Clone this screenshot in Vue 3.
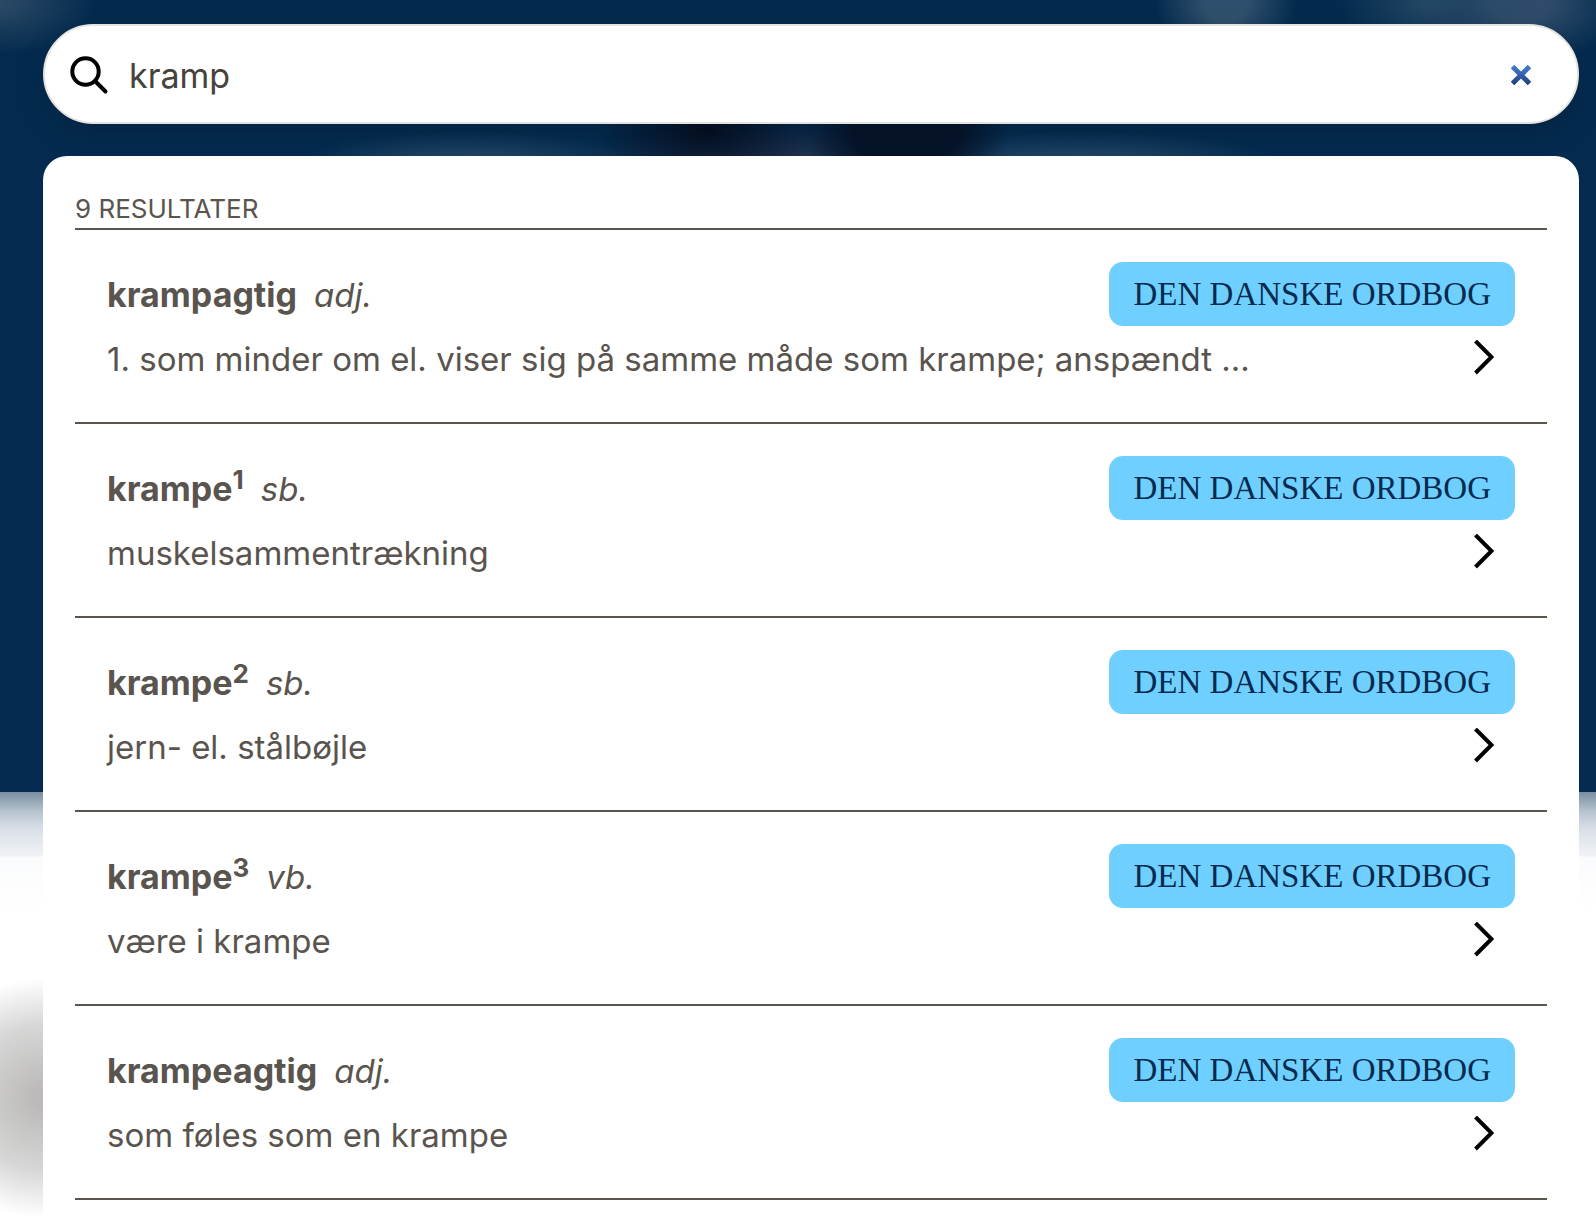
<script setup>
import { ref } from 'vue'

const query = ref('kramp')
const results = [
  { word: 'krampagtig', kind: 'adj.', text: '1. som minder om el. viser sig på samme måde som krampe; anspændt ...' },
  { word: 'krampe', index: '1', kind: 'sb.', text: 'muskelsammentrækning' },
  { word: 'krampe', index: '2', kind: 'sb.', text: 'jern- el. stålbøjle' },
  { word: 'krampe', index: '3', kind: 'vb.', text: 'være i krampe' },
  { word: 'krampeagtig', kind: 'adj.', text: 'som føles som en krampe' },
]
</script>

<template>
  <main class="page">
    <div class="backdrop" aria-hidden="true">
      <div class="hero"></div>
      <div class="below"></div>
    </div>

    <form class="search" role="search" @submit.prevent>
      <svg class="search-icon" viewBox="0 0 40 40" aria-hidden="true">
        <circle cx="16.5" cy="16.5" r="13.2" />
        <path d="M26 26 36.5 36.5" />
      </svg>
      <input v-model="query" class="field" type="text" aria-label="Søg" />
      <button class="clear" type="button" aria-label="Ryd" @click="query = ''">
        <svg viewBox="0 0 20 20" aria-hidden="true">
          <defs>
            <linearGradient id="clear-fill" gradientUnits="userSpaceOnUse" x1="0" y1="0" x2="0" y2="20">
              <stop offset="0" stop-color="#3f82cc" />
              <stop offset="0.5" stop-color="#3560ae" />
              <stop offset="1" stop-color="#1f3a70" />
            </linearGradient>
          </defs>
          <path d="M1.5 1.5 18.5 18.5M18.5 1.5 1.5 18.5" stroke="url(#clear-fill)" />
        </svg>
      </button>
    </form>

    <section class="panel">
      <h2 class="count">9 RESULTATER</h2>
      <ul class="list">
        <li v-for="(r, i) in results" :key="i">
          <a class="result" href="#">
            <span class="row">
              <span class="entry">
                <b class="word">{{ r.word }}<sup v-if="r.index">{{ r.index }}</sup></b>
                <i class="kind">{{ r.kind }}</i>
              </span>
              <span class="badge">DEN DANSKE ORDBOG</span>
            </span>
            <span class="row">
              <span class="text">{{ r.text }}</span>
              <svg class="chevron" viewBox="0 0 20 36" aria-hidden="true">
                <path d="M1.5 1 17.5 17 1.5 33" />
              </svg>
            </span>
          </a>
        </li>
      </ul>
    </section>
  </main>
</template>

<style>
body {
  margin: 0;
}
</style>

<style scoped>
.page {
  position: relative;
  box-sizing: border-box;
  height: 100vh;
  padding: 24px 17px 0 43px;
  display: flex;
  flex-direction: column;
  gap: 32px;
  overflow: hidden;
  color: #59544e;
  font-family: Inter, "Liberation Sans", sans-serif;
}
.backdrop {
  position: absolute;
  inset: 0;
  z-index: -1;
  display: flex;
  flex-direction: column;
  background: #fff;
}
.hero {
  height: 792px;
  background:
    radial-gradient(ellipse 95px 50px at 0 4px, #2c4a66, transparent),
    radial-gradient(ellipse 70px 60px at 1226px 4px, #2f506c 30%, transparent),
    radial-gradient(ellipse 90px 60px at 1430px 4px, #254865, transparent),
    radial-gradient(ellipse 100px 60px at 1520px 4px, #2e4c6a 30%, transparent),
    radial-gradient(ellipse 110px 60px at 706px 130px, #050f22, transparent),
    radial-gradient(ellipse 105px 60px at 905px 134px, #06142a 50%, transparent),
    radial-gradient(ellipse 210px 40px at 780px 165px, #29344e, transparent),
    radial-gradient(ellipse 170px 34px at 470px 165px, #2a4c6c, transparent),
    radial-gradient(ellipse 200px 34px at 1080px 165px, #2a4c6c, transparent),
    #042b4f;
}
.below {
  flex: 1;
  background:
    radial-gradient(ellipse 130px 120px at 46px 306px, #bcbbba 10%, #bcbbba99 60%, transparent),
    linear-gradient(#788fa1, #b9c4d0 20px, #dbe1e9 38px, #f0f2f5 64px, #fafbfc 65px, #fff 120px);
}
.search {
  box-sizing: border-box;
  height: 100px;
  flex: none;
  display: flex;
  align-items: center;
  padding: 2px 46px 0 24px;
  background: #fff;
  border: 2px solid #e6e3e1;
  border-radius: 50px;
  box-shadow: 0 8px 28px rgba(0, 0, 0, 0.16);
}
.search-icon {
  width: 40px;
  height: 40px;
  flex: none;
  fill: none;
  stroke: #000;
  stroke-width: 4;
  stroke-linecap: round;
}
.field {
  flex: 1;
  min-width: 0;
  height: 60px;
  margin: 0;
  padding: 0 0 0 20px;
  border: 0;
  outline: 0;
  background: none;
  color: #46433c;
  font: 400 34px Inter, "Liberation Sans", sans-serif;
}
.clear {
  display: flex;
  padding: 0;
  border: 0;
  background: none;
}
.clear svg {
  width: 20px;
  height: 20px;
  stroke-width: 5;
}
.panel {
  flex: 1;
  min-height: 0;
  padding: 32px 32px 0;
  overflow: hidden;
  background: #fff;
  border-radius: 24px 24px 0 0;
}
.count {
  margin: 0;
  height: 40px;
  line-height: 42px;
  border-bottom: 2px solid #59544e;
  font-size: 26px;
  font-weight: 400;
}
.list {
  margin: 0;
  padding: 0;
  list-style: none;
}
.result {
  display: block;
  padding: 32px;
  border-bottom: 2px solid #59544e;
  color: inherit;
  text-decoration: none;
}
.row {
  display: flex;
  height: 64px;
  align-items: center;
  justify-content: space-between;
  font-size: 33px;
  line-height: 64px;
}
.entry,
.text {
  padding-top: 2px;
}
.entry {
  display: flex;
  align-items: baseline;
  gap: 17px;
}
.word {
  font-size: 34px;
  font-weight: 700;
}
.word sup {
  font-size: 26px;
  line-height: 0;
}
.badge {
  padding: 0 24px;
  border-radius: 14px;
  background: #6fd0ff;
  color: #042b4f;
  font-family: "Liberation Serif", serif;
  font-size: 33px;
}
.chevron {
  width: 20px;
  height: 36px;
  margin-right: 21px;
  fill: none;
  stroke: #000;
  stroke-width: 4;
}
</style>
